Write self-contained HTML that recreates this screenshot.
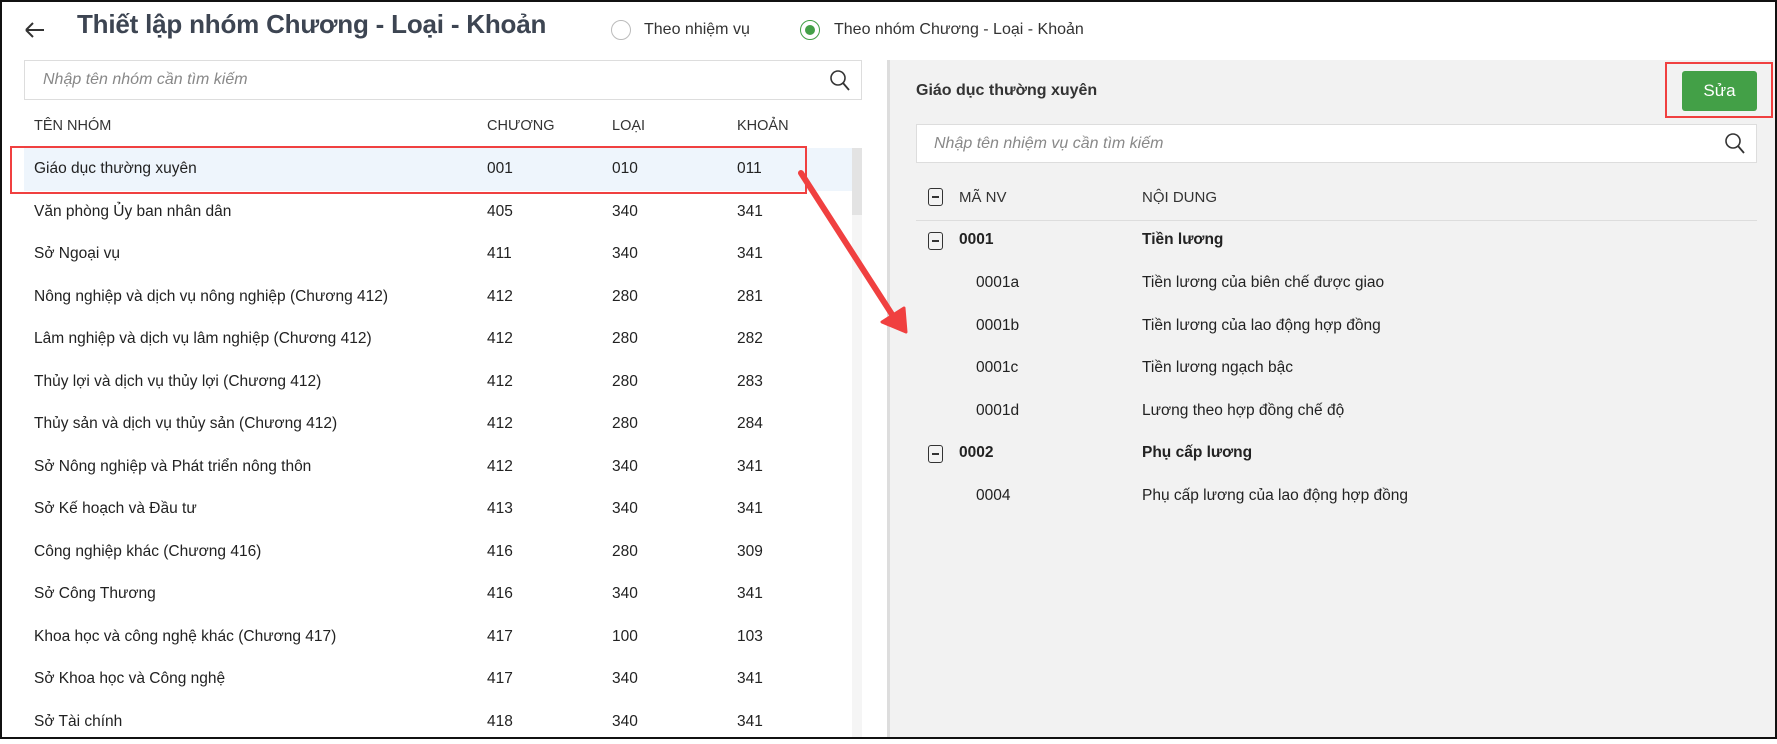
<!DOCTYPE html>
<html><head><meta charset="utf-8"><style>
*{margin:0;padding:0;box-sizing:border-box}
body{width:1777px;height:739px;overflow:hidden;background:#fff;font-family:"Liberation Sans",sans-serif;color:#222;position:relative;font-size:15.5px}
.frame{position:absolute;inset:0;border:2px solid #111;z-index:10;pointer-events:none}
.abs{position:absolute;white-space:nowrap}
.row{position:absolute;left:24px;width:828px;height:43px}
.row span{position:absolute;top:12px}
.radio{position:absolute;width:20px;height:20px;border-radius:50%;border:1.5px solid #bbb;background:#fff}
.search{position:absolute;background:#fff;border:1px solid #ddd;font-style:italic;color:#888;font-size:16px}
.chk{position:absolute;width:15px;height:18px;border:1.6px solid #333;border-radius:3px}
.chk:after{content:"";position:absolute;left:3px;right:3px;top:7px;height:1.5px;background:#333}
</style></head><body>
<div class="frame"></div>
<svg class="abs" style="left:22px;top:20px" width="24" height="20"><path d="M4 10H22M4 10L11 3M4 10L11 17" stroke="#333" stroke-width="2" fill="none"/></svg>
<div class="abs" style="left:77px;top:9px;font-size:26px;font-weight:bold;color:#3d4552;letter-spacing:-0.2px">Thiết lập nhóm Chương - Loại - Khoản</div>
<div class="radio" style="left:611px;top:20px"></div>
<div class="abs" style="left:644px;top:21px;font-size:16px;color:#333">Theo nhiệm vụ</div>
<div class="radio" style="left:800px;top:20px;border-color:#43a047"><div style="position:absolute;left:3.5px;top:3.5px;width:10px;height:10px;border-radius:50%;background:#43a047"></div></div>
<div class="abs" style="left:834px;top:21px;font-size:16px;color:#333">Theo nhóm Chương - Loại - Khoản</div>

<div class="search" style="left:24px;top:60px;width:838px;height:40px"><span class="abs" style="left:18px;top:10px">Nhập tên nhóm cần tìm kiếm</span>
<svg class="abs" style="right:10px;top:8px" width="22" height="24"><circle cx="9" cy="9" r="7" stroke="#333" stroke-width="1.6" fill="none"/><path d="M14 14L20 21" stroke="#333" stroke-width="1.8"/></svg></div>

<div class="abs" style="left:34px;top:118px;font-size:14.5px;color:#333">TÊN NHÓM</div>
<div class="abs" style="left:487px;top:118px;font-size:14.5px;color:#333">CHƯƠNG</div>
<div class="abs" style="left:612px;top:118px;font-size:14.5px;color:#333">LOẠI</div>
<div class="abs" style="left:737px;top:118px;font-size:14.5px;color:#333">KHOẢN</div>

<div class="abs" style="left:852px;top:148px;width:10px;height:591px;background:#f5f5f5"></div>
<div class="abs" style="left:852px;top:148px;width:10px;height:67px;background:#e3e3e3"></div>
<div class="abs" style="left:24px;top:148px;width:828px;height:43px;background:#eef5fc"></div>

<div class="row" style="top:148px"><span style="left:10px">Giáo dục thường xuyên</span><span style="left:463px">001</span><span style="left:588px">010</span><span style="left:713px">011</span></div>
<div class="row" style="top:191px"><span style="left:10px">Văn phòng Ủy ban nhân dân</span><span style="left:463px">405</span><span style="left:588px">340</span><span style="left:713px">341</span></div>
<div class="row" style="top:233px"><span style="left:10px">Sở Ngoại vụ</span><span style="left:463px">411</span><span style="left:588px">340</span><span style="left:713px">341</span></div>
<div class="row" style="top:276px"><span style="left:10px">Nông nghiệp và dịch vụ nông nghiệp (Chương 412)</span><span style="left:463px">412</span><span style="left:588px">280</span><span style="left:713px">281</span></div>
<div class="row" style="top:318px"><span style="left:10px">Lâm nghiệp và dịch vụ lâm nghiệp (Chương 412)</span><span style="left:463px">412</span><span style="left:588px">280</span><span style="left:713px">282</span></div>
<div class="row" style="top:361px"><span style="left:10px">Thủy lợi và dịch vụ thủy lợi (Chương 412)</span><span style="left:463px">412</span><span style="left:588px">280</span><span style="left:713px">283</span></div>
<div class="row" style="top:403px"><span style="left:10px">Thủy sản và dịch vụ thủy sản (Chương 412)</span><span style="left:463px">412</span><span style="left:588px">280</span><span style="left:713px">284</span></div>
<div class="row" style="top:446px"><span style="left:10px">Sở Nông nghiệp và Phát triển nông thôn</span><span style="left:463px">412</span><span style="left:588px">340</span><span style="left:713px">341</span></div>
<div class="row" style="top:488px"><span style="left:10px">Sở Kế hoạch và Đầu tư</span><span style="left:463px">413</span><span style="left:588px">340</span><span style="left:713px">341</span></div>
<div class="row" style="top:531px"><span style="left:10px">Công nghiệp khác (Chương 416)</span><span style="left:463px">416</span><span style="left:588px">280</span><span style="left:713px">309</span></div>
<div class="row" style="top:573px"><span style="left:10px">Sở Công Thương</span><span style="left:463px">416</span><span style="left:588px">340</span><span style="left:713px">341</span></div>
<div class="row" style="top:616px"><span style="left:10px">Khoa học và công nghệ khác (Chương 417)</span><span style="left:463px">417</span><span style="left:588px">100</span><span style="left:713px">103</span></div>
<div class="row" style="top:658px"><span style="left:10px">Sở Khoa học và Công nghệ</span><span style="left:463px">417</span><span style="left:588px">340</span><span style="left:713px">341</span></div>
<div class="row" style="top:701px"><span style="left:10px">Sở Tài chính</span><span style="left:463px">418</span><span style="left:588px">340</span><span style="left:713px">341</span></div>

<div class="abs" style="left:10px;top:146px;width:797px;height:48px;border:2.5px solid #f04040"></div>

<div class="abs" style="left:887px;top:60px;width:890px;height:679px;background:#f2f2f2;border-left:3px solid #ddd"></div>
<div class="abs" style="left:916px;top:82px;font-size:16px;font-weight:bold;color:#333">Giáo dục thường xuyên</div>
<div class="abs" style="left:1682px;top:71px;width:75px;height:40px;background:#43a047;border-radius:3px;color:#fff;font-size:17px;text-align:center;line-height:40px">Sửa</div>
<div class="abs" style="left:1665px;top:62px;width:108px;height:56px;border:2.5px solid #f04040"></div>
<div class="search" style="left:916px;top:124px;width:841px;height:39px"><span class="abs" style="left:17px;top:10px">Nhập tên nhiệm vụ cần tìm kiếm</span>
<svg class="abs" style="right:10px;top:7px" width="22" height="24"><circle cx="9" cy="9" r="7" stroke="#333" stroke-width="1.6" fill="none"/><path d="M14 14L20 21" stroke="#333" stroke-width="1.8"/></svg></div>

<div class="chk" style="left:928px;top:188px"></div>
<div class="abs" style="left:959px;top:189px;font-size:15px;color:#333">MÃ NV</div>
<div class="abs" style="left:1142px;top:189px;font-size:15px;color:#333">NỘI DUNG</div>
<div class="abs" style="left:916px;top:220px;width:841px;height:1px;background:#ddd"></div>
<div class="chk" style="left:928px;top:232px"></div>
<div class="abs" style="left:959px;top:231px;font-weight:bold">0001</div>
<div class="abs" style="left:1142px;top:231px;font-weight:bold">Tiền lương</div>
<div class="abs" style="left:976px;top:274px">0001a</div><div class="abs" style="left:1142px;top:274px">Tiền lương của biên chế được giao</div>
<div class="abs" style="left:976px;top:317px">0001b</div><div class="abs" style="left:1142px;top:317px">Tiền lương của lao động hợp đồng</div>
<div class="abs" style="left:976px;top:359px">0001c</div><div class="abs" style="left:1142px;top:359px">Tiền lương ngạch bậc</div>
<div class="abs" style="left:976px;top:402px">0001d</div><div class="abs" style="left:1142px;top:402px">Lương theo hợp đồng chế độ</div>
<div class="chk" style="left:928px;top:445px"></div>
<div class="abs" style="left:959px;top:444px;font-weight:bold">0002</div>
<div class="abs" style="left:1142px;top:444px;font-weight:bold">Phụ cấp lương</div>
<div class="abs" style="left:976px;top:487px">0004</div><div class="abs" style="left:1142px;top:487px">Phụ cấp lương của lao động hợp đồng</div>

<svg class="abs" style="left:0;top:0;z-index:5" width="1777" height="739"><path d="M801 173L893 316" stroke="#f04040" stroke-width="6" stroke-linecap="round"/><path d="M882 322L906 332L904 308Z" fill="#f04040" stroke="#f04040" stroke-width="3" stroke-linejoin="round"/></svg>
</body></html>
